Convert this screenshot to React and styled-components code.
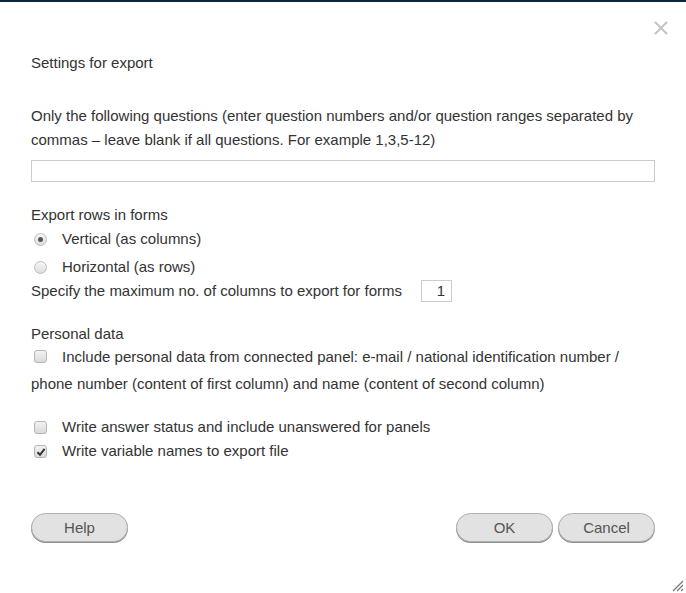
import React, { useState } from "react";
import styled, { createGlobalStyle } from "styled-components";

const GlobalStyle = createGlobalStyle`
  html, body {
    margin: 0;
    padding: 0;
    background: #fff;
  }
  body {
    font-family: "Liberation Sans", Arial, sans-serif;
    font-size: 15px;
    color: #333;
  }
`;

const TopStrip = styled.div`
  height: 2px;
  background: #0f2436;
`;

const Dialog = styled.div`
  position: relative;
  height: 591px;
  padding: 0 31px;
  box-sizing: border-box;
  display: flex;
  flex-direction: column;
  line-height: 24px;
`;

const CloseButton = styled.button`
  position: absolute;
  top: 16px;
  right: 15px;
  width: 20px;
  height: 20px;
  padding: 0;
  border: none;
  background: none;
  cursor: pointer;
  display: flex;
  align-items: center;
  justify-content: center;
`;

const Title = styled.div`
  margin-top: 49px;
`;

const Paragraph = styled.div`
  margin-top: ${({ $top }) => $top || 0}px;
  line-height: ${({ $lh }) => $lh || 24}px;
`;

const TextInput = styled.input`
  margin-top: 8px;
  height: 22px;
  box-sizing: border-box;
  border: 1px solid #ccc;
  outline: none;
  font: inherit;
  padding: 0 4px;
`;

const OptionRow = styled.label`
  display: flex;
  align-items: center;
  margin-top: ${({ $top }) => $top || 0}px;
  height: 24px;
  cursor: pointer;
`;

const Radio = styled.span`
  width: 13px;
  height: 13px;
  box-sizing: border-box;
  border-radius: 50%;
  border: 1px solid #bdbdbd;
  background: linear-gradient(#f7f7f7, #dcdcdc);
  margin: 0 15px 0 3px;
  position: relative;
  flex: none;

  &::after {
    content: "";
    display: ${({ $checked }) => ($checked ? "block" : "none")};
    position: absolute;
    left: 3px;
    top: 3px;
    width: 5px;
    height: 5px;
    border-radius: 50%;
    background: #555;
  }
`;

const Box = styled.span`
  display: inline-block;
  vertical-align: -1px;
  width: 13px;
  height: 13px;
  box-sizing: border-box;
  border-radius: 3px;
  border: 1px solid #b5b5b5;
  background: linear-gradient(#f3f3f3, #d9d9d9);
  margin: 0 15px 0 3px;
  position: relative;
  flex: none;
`;

const Check = styled.svg`
  position: absolute;
  left: 1px;
  top: 1px;
`;

const SmallInput = styled.input`
  width: 31px;
  height: 22px;
  box-sizing: border-box;
  margin-left: 19px;
  border: 1px solid #ccc;
  outline: none;
  font: inherit;
  color: #333;
  text-align: right;
  padding: 0 6px;
`;

const Footer = styled.div`
  margin-top: 50px;
  display: flex;
  align-items: center;
  gap: 5px;
`;

const Spacer = styled.div`
  flex: 1;
`;

const Button = styled.button`
  width: 97px;
  height: 29px;
  border-radius: 15px;
  border: 1px solid #b0b0b0;
  box-shadow: 0 1px 0 #8f8f8f;
  background: #e2e2e2;
  font-family: "Liberation Sans", Arial, sans-serif;
  font-size: 15px;
  color: #555;
  cursor: pointer;
`;

const Grip = styled.svg`
  position: absolute;
  right: 2px;
  bottom: 1px;
`;

function Checkbox({ checked }) {
  return (
    <Box>
      {checked && (
        <Check width="10" height="10" viewBox="0 0 10 10">
          <path d="M1.5 5.2 L4 7.8 L8.6 1.8" fill="none" stroke="#333" strokeWidth="2" />
        </Check>
      )}
    </Box>
  );
}

export default function App() {
  const [vertical, setVertical] = useState(true);
  return (
    <>
      <GlobalStyle />
      <TopStrip />
      <Dialog>
        <CloseButton aria-label="Close">
          <svg width="14" height="14" viewBox="0 0 14 14">
            <path d="M1 1 L13 13 M13 1 L1 13" stroke="#c4c4c4" strokeWidth="2" />
          </svg>
        </CloseButton>
        <Title>Settings for export</Title>
        <Paragraph $top={29}>
          Only the following questions (enter question numbers and/or question ranges separated by
          commas – leave blank if all questions. For example 1,3,5-12)
        </Paragraph>
        <TextInput type="text" />
        <Paragraph $top={21}>Export rows in forms</Paragraph>
        <OptionRow onClick={() => setVertical(true)}>
          <Radio $checked={vertical} />
          Vertical (as columns)
        </OptionRow>
        <OptionRow $top={4} onClick={() => setVertical(false)}>
          <Radio $checked={!vertical} />
          Horizontal (as rows)
        </OptionRow>
        <OptionRow as="div">
          Specify the maximum no. of columns to export for forms
          <SmallInput type="text" defaultValue="1" />
        </OptionRow>
        <Paragraph $top={19}>Personal data</Paragraph>
        <Paragraph $top={-3} $lh={27}>
          <Checkbox />
          Include personal data from connected panel: e-mail / national identification number /
          phone number (content of first column) and name (content of second column)
        </Paragraph>
        <OptionRow $top={18}>
          <Checkbox />
          Write answer status and include unanswered for panels
        </OptionRow>
        <OptionRow>
          <Checkbox checked />
          Write variable names to export file
        </OptionRow>
        <Footer>
          <Button>Help</Button>
          <Spacer />
          <Button>OK</Button>
          <Button>Cancel</Button>
        </Footer>
        <Grip width="14" height="14" viewBox="0 0 14 14">
          <path d="M3 13 L13 3 M7 13 L13 7 M11 13 L13 11" stroke="#777" strokeWidth="1.2" />
        </Grip>
      </Dialog>
    </>
  );
}
